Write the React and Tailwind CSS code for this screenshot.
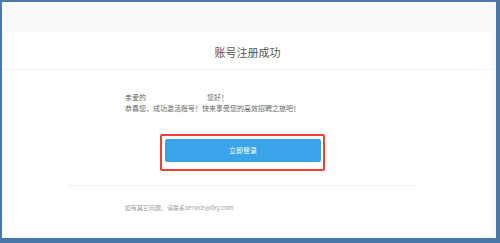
export default function App() {
  return (
    <div
      className="w-[500px] h-[243px] bg-[#4a77a8] pt-[2px] pl-[2px] pr-[4px] pb-[5px]"
      style={{ fontFamily: '"Noto Sans CJK SC", "Liberation Sans", sans-serif' }}
    >
      <div className="h-full bg-[#f8f9fb] flex flex-col pt-[30px] pb-[2px] pl-[1px] pr-[4px]">
        <div className="flex-1 bg-white rounded-[4px] flex flex-col">
          <div className="h-[38px] pt-[4px] flex items-center justify-center border-b border-[#f1f2f4] text-[11px] text-[#555]">
            账号注册成功
          </div>
          <div className="pl-[122px] pt-[22px] text-[7px] leading-[11px] text-[#666]">
            <div className="flex">
              <span>亲爱的</span>
              <span className="ml-[61px]">您好！</span>
            </div>
            <div>恭喜您，成功激活账号！快来享受您的高效招聘之旅吧！</div>
          </div>
          <div className="flex justify-center mt-[20px] pr-[10px]">
            <div className="border-2 border-[#f0403c] rounded-[2px] pl-[3px] pr-[2px] pt-[3px] pb-[7px]">
              <button className="w-[156px] h-[23px] bg-[#39a4ea] rounded-[2px] text-white text-[7px] flex items-center justify-center">
                立即登录
              </button>
            </div>
          </div>
          <div className="ml-[64px] mr-[74px] mt-[14px] border-t border-[#f1f2f4]" />
          <div className="pl-[122px] pt-[17px] text-[6px] text-[#999]">
            如有其它问题，请联系service@dxy.com
          </div>
        </div>
      </div>
    </div>
  );
}
